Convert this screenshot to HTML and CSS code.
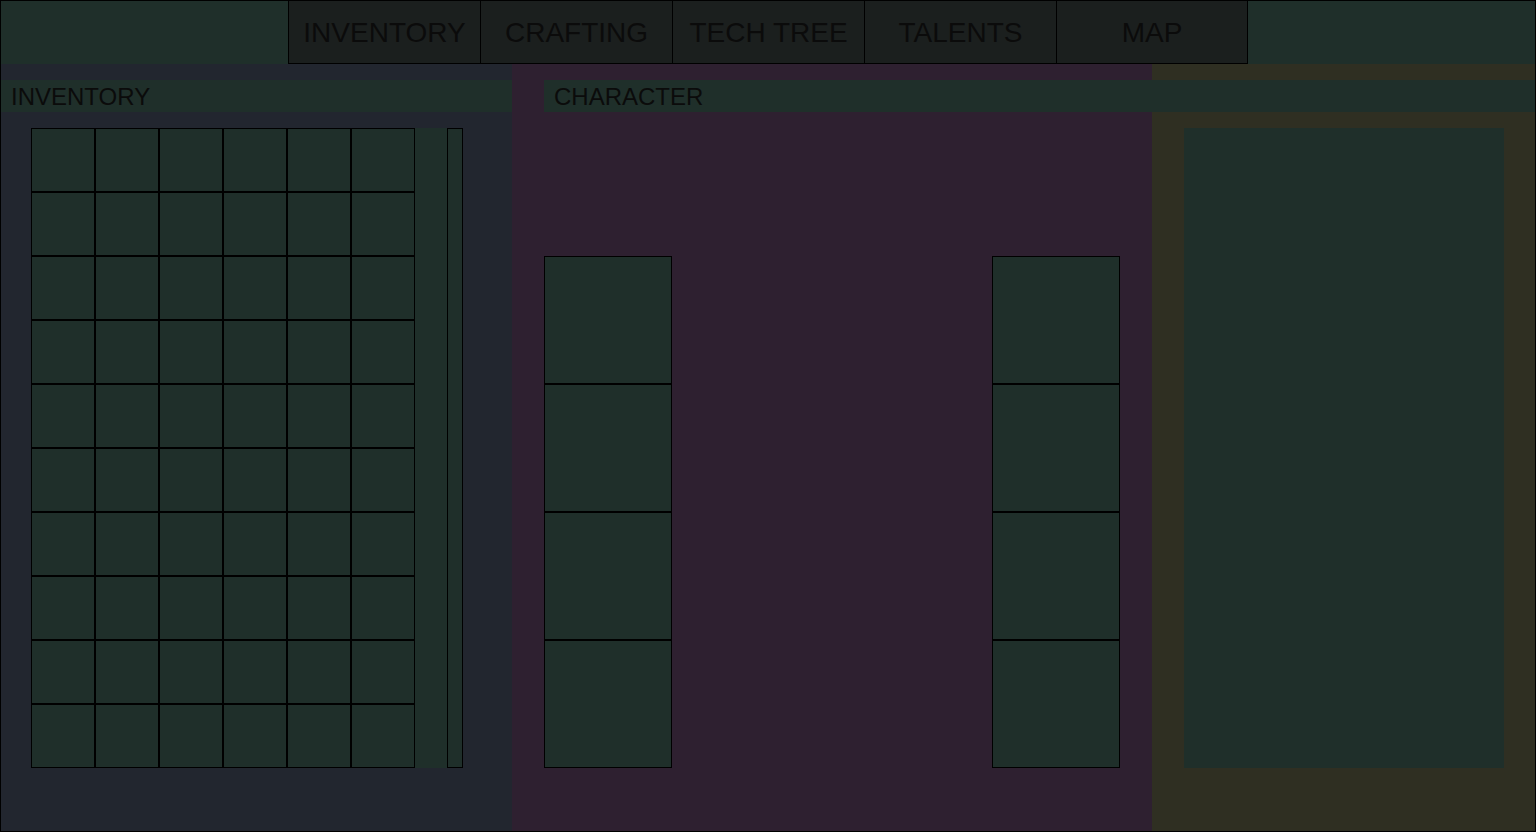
FILE: index.html
```html
<!DOCTYPE html>
<html lang="en">
<head>
<meta charset="utf-8">
<title>Game UI</title>
<link rel="stylesheet" href="styles.css">
</head>
<body>
<div class="app">
  <nav class="topbar">
    <div class="tab">INVENTORY</div>
    <div class="tab">CRAFTING</div>
    <div class="tab">TECH TREE</div>
    <div class="tab">TALENTS</div>
    <div class="tab tab-last">MAP</div>
  </nav>
  <main class="main">
    <section class="inv-panel">
      <div class="panel-header">INVENTORY</div>
      <div class="inv-body">
        <div class="grid">
          <div class="cell"></div><div class="cell"></div><div class="cell"></div><div class="cell"></div><div class="cell"></div><div class="cell"></div>
          <div class="cell"></div><div class="cell"></div><div class="cell"></div><div class="cell"></div><div class="cell"></div><div class="cell"></div>
          <div class="cell"></div><div class="cell"></div><div class="cell"></div><div class="cell"></div><div class="cell"></div><div class="cell"></div>
          <div class="cell"></div><div class="cell"></div><div class="cell"></div><div class="cell"></div><div class="cell"></div><div class="cell"></div>
          <div class="cell"></div><div class="cell"></div><div class="cell"></div><div class="cell"></div><div class="cell"></div><div class="cell"></div>
          <div class="cell"></div><div class="cell"></div><div class="cell"></div><div class="cell"></div><div class="cell"></div><div class="cell"></div>
          <div class="cell"></div><div class="cell"></div><div class="cell"></div><div class="cell"></div><div class="cell"></div><div class="cell"></div>
          <div class="cell"></div><div class="cell"></div><div class="cell"></div><div class="cell"></div><div class="cell"></div><div class="cell"></div>
          <div class="cell"></div><div class="cell"></div><div class="cell"></div><div class="cell"></div><div class="cell"></div><div class="cell"></div>
          <div class="cell"></div><div class="cell"></div><div class="cell"></div><div class="cell"></div><div class="cell"></div><div class="cell"></div>
        </div>
        <div class="scrollbar"></div>
      </div>
    </section>
    <section class="char-panel">
      <div class="panel-header char-header">CHARACTER</div>
      <div class="char-body">
        <div class="slot-col">
          <div class="slot"></div><div class="slot"></div><div class="slot"></div><div class="slot"></div>
        </div>
        <div class="slot-col">
          <div class="slot"></div><div class="slot"></div><div class="slot"></div><div class="slot"></div>
        </div>
      </div>
    </section>
    <section class="aux-panel">
      <div class="aux-box"></div>
    </section>
  </main>
</div>
</body>
</html>
```
FILE: styles.css
```css
html, body {
  margin: 0;
  padding: 0;
  overflow: hidden;
}

body {
  font-family: "Liberation Sans", Arial, sans-serif;
  color: #0b0b0b;
}

.app {
  width: 1536px;
  height: 832px;
  box-sizing: border-box;
  border: 1px solid #000;
  display: flex;
  flex-direction: column;
  overflow: hidden;
}

.topbar {
  height: 63px;
  flex: 0 0 63px;
  background: #1f2f2a;
  display: flex;
  justify-content: center;
}

.tab {
  width: 192px;
  height: 63px;
  box-sizing: border-box;
  border-left: 1px solid #000;
  border-bottom: 1px solid #000;
  background: #1b1f1e;
  font-size: 28px;
  line-height: 63px;
  text-align: center;
  white-space: nowrap;
}

.tab-last {
  border-right: 1px solid #000;
}

.main {
  flex: 1;
  display: flex;
}

.panel-header {
  height: 32px;
  background: #1f2f2a;
  font-size: 24px;
  line-height: 31px;
  padding: 1px 0 0 10px;
  box-sizing: border-box;
}

.inv-panel {
  width: 511px;
  flex: 0 0 511px;
  background: #22262f;
  padding-top: 16px;
  box-sizing: border-box;
}

.inv-body {
  margin: 16px 0 0 30px;
  width: 432px;
  height: 640px;
  background: #1f2f2a;
  display: flex;
  gap: 32px;
}

.grid {
  display: grid;
  grid-template-columns: repeat(6, 64px);
  grid-auto-rows: 64px;
}

.cell {
  box-sizing: border-box;
  border: 1px solid #000;
}

.scrollbar {
  width: 16px;
  height: 640px;
  box-sizing: border-box;
  border: 1px solid #000;
}

.char-panel {
  width: 640px;
  flex: 0 0 640px;
  background: #2e2030;
  padding: 16px 32px 0;
  box-sizing: border-box;
}

.char-header {
  width: 991px;
  position: relative;
  z-index: 1;
}

.char-body {
  margin-top: 144px;
  height: 512px;
  display: flex;
  justify-content: space-between;
}

.slot-col {
  display: flex;
  flex-direction: column;
}

.slot {
  width: 128px;
  height: 128px;
  box-sizing: border-box;
  border: 1px solid #000;
  background: #1f2f2a;
}

.aux-panel {
  flex: 1;
  background: #2f2f22;
  padding: 64px 31px 0 32px;
  box-sizing: border-box;
}

.aux-box {
  width: 320px;
  height: 640px;
  background: #1f2f2a;
}
```
